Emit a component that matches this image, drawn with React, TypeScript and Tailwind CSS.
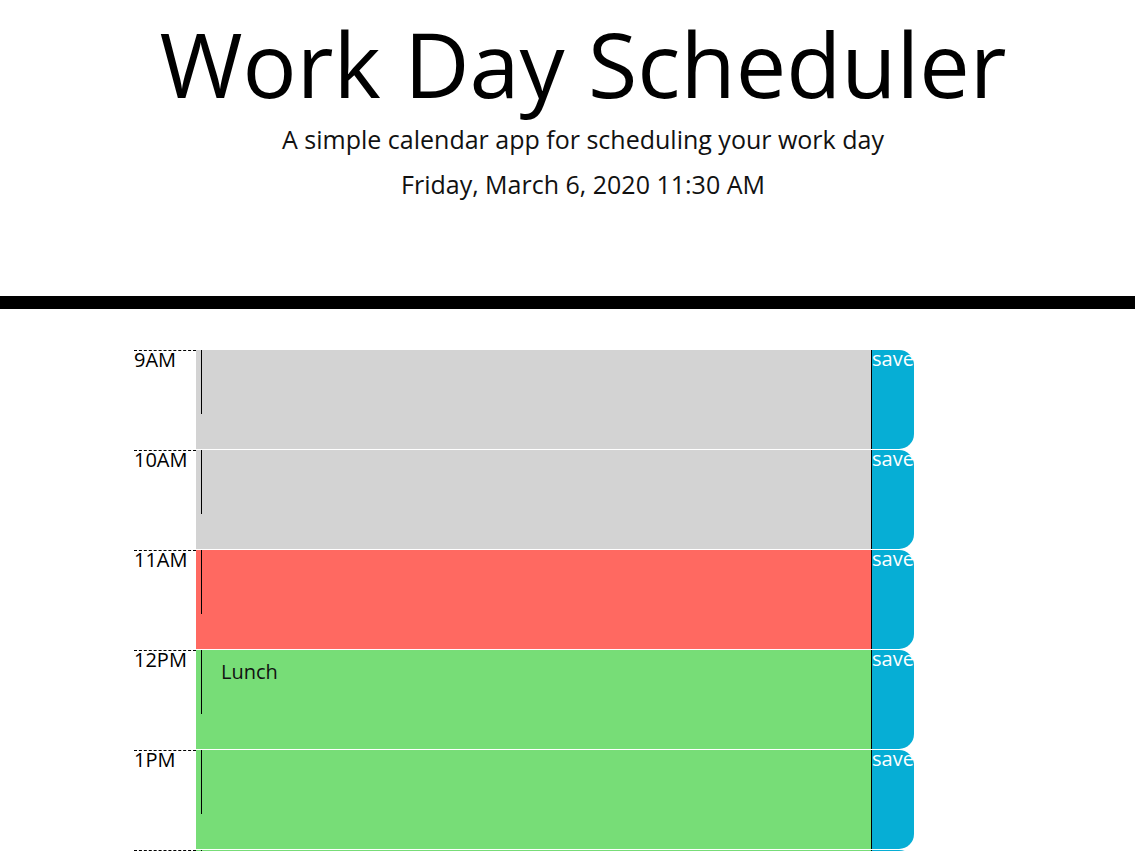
import React from 'react';

type Block = { hour: string; state: 'past' | 'present' | 'future'; text?: string };

const blocks: Block[] = [
  { hour: '9AM', state: 'past' },
  { hour: '10AM', state: 'past' },
  { hour: '11AM', state: 'present' },
  { hour: '12PM', state: 'future', text: 'Lunch' },
  { hour: '1PM', state: 'future' },
  { hour: '2PM', state: 'future' },
  { hour: '3PM', state: 'future' },
  { hour: '4PM', state: 'future' },
  { hour: '5PM', state: 'future' },
];

const stateBg = {
  past: 'bg-[#d3d3d3]',
  present: 'bg-[#ff6961]',
  future: 'bg-[#77dd77]',
};

export default function App() {
  return (
    <div className="min-h-screen bg-white font-['Open_Sans',sans-serif] text-black">
      {/* Header */}
      <header className="pl-[31px] pt-[18px] text-center">
        <h1 className="text-[90px] leading-none font-normal">Work Day Scheduler</h1>
        <p className="mt-[19px] text-[25px] leading-none text-[#111]">
          A simple calendar app for scheduling your work day
        </p>
        <p className="mt-[20px] text-[25px] leading-none text-[#111]">
          Friday, March 6, 2020 11:30 AM
        </p>
      </header>

      <div className="mt-[99px] h-[13px] w-full bg-black" />

      {/* Time blocks */}
      <div className="mt-[40px] ml-[134px] w-[780px] flex flex-col">
        {blocks.map((b) => (
          <div key={b.hour} className="flex h-[100px] border-t border-white">
            <div className="w-[62px] border-t border-dashed border-black text-[20px] leading-[17px]">
              {b.hour}
            </div>
            <div className={`w-[675px] pl-[5px] ${stateBg[b.state]}`}>
              <div className="h-[64px] border-l border-black pl-[19px] pt-[12px] text-[20px] leading-none text-[#111]">
                {b.text ?? ''}
              </div>
            </div>
            <button className="flex w-[43px] items-start justify-center rounded-r-[15px] border-l border-black bg-[#06aed5] text-[20px] leading-[18px] text-white">
              save
            </button>
          </div>
        ))}
      </div>
    </div>
  );
}
